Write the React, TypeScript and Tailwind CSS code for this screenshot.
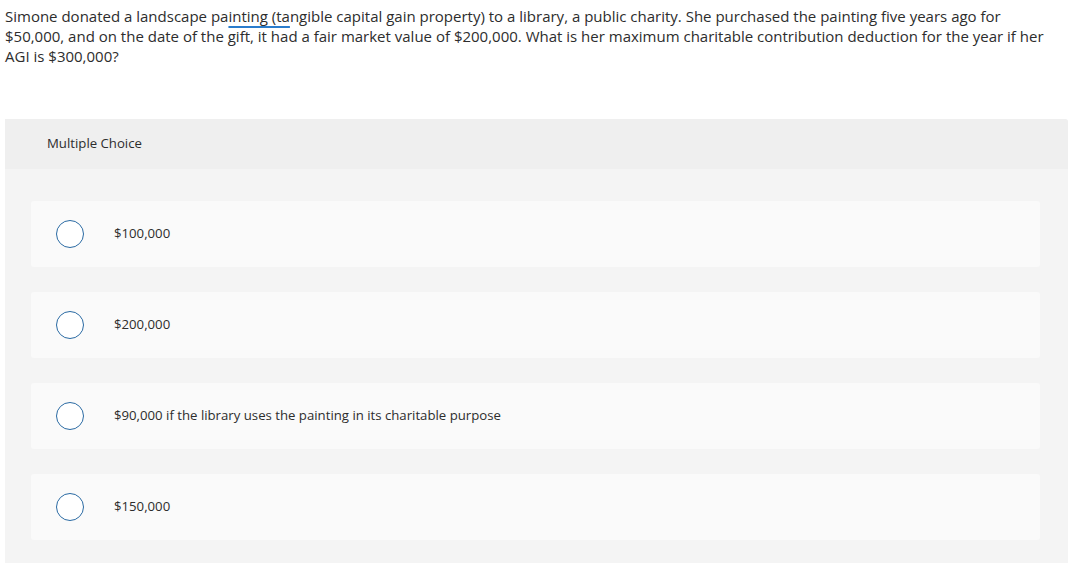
import React from 'react';

const options = [
  '$100,000',
  '$200,000',
  '$90,000 if the library uses the painting in its charitable purpose',
  '$150,000'
];

export default function App() {
  return (
    <div className="bg-white w-[1089px] h-[573px] overflow-hidden text-[#2d2d2d] font-['Open_Sans','Noto_Sans',sans-serif]">
      {/* Question */}
      <p className="px-[5px] pt-[6px] text-[15px] leading-[20px] w-[1085px] whitespace-nowrap">
        Simone donated a landscape pa
        <span className="underline decoration-[#2a7ccc] decoration-2 underline-offset-[4px]">inting (ta</span>
        ngible capital gain property) to a library, a public charity. She purchased the painting five years ago for
        <br />
        $50,000, and on the date of the gift, it had a fair market value of $200,000. What is her maximum charitable
        contribution deduction for the year if her
        <br />
        AGI is $300,000?
      </p>

      {/* Multiple choice panel */}
      <div className="mt-[53px] ml-[5px] w-[1063px] rounded-tr-[3px] bg-[#f4f4f4]">
        <div className="h-[50px] flex items-center pl-[42px] bg-[#efefef] rounded-tr-[3px] text-[13.2px]">
          Multiple Choice
        </div>
        <div className="pt-[32px] pb-[23px] pl-[26px] pr-[28px] flex flex-col gap-[25px]">
          {options.map((opt) => (
            <div key={opt} className="h-[66px] rounded-[3px] bg-[#fafafa] flex items-center pl-[25px]">
              <div className="w-[28px] h-[28px] rounded-full border-[1.5px] border-[#2a6aa3] bg-white shrink-0" />
              <span className="ml-[30px] text-[13.2px]">{opt}</span>
            </div>
          ))}
        </div>
      </div>
    </div>
  );
}
